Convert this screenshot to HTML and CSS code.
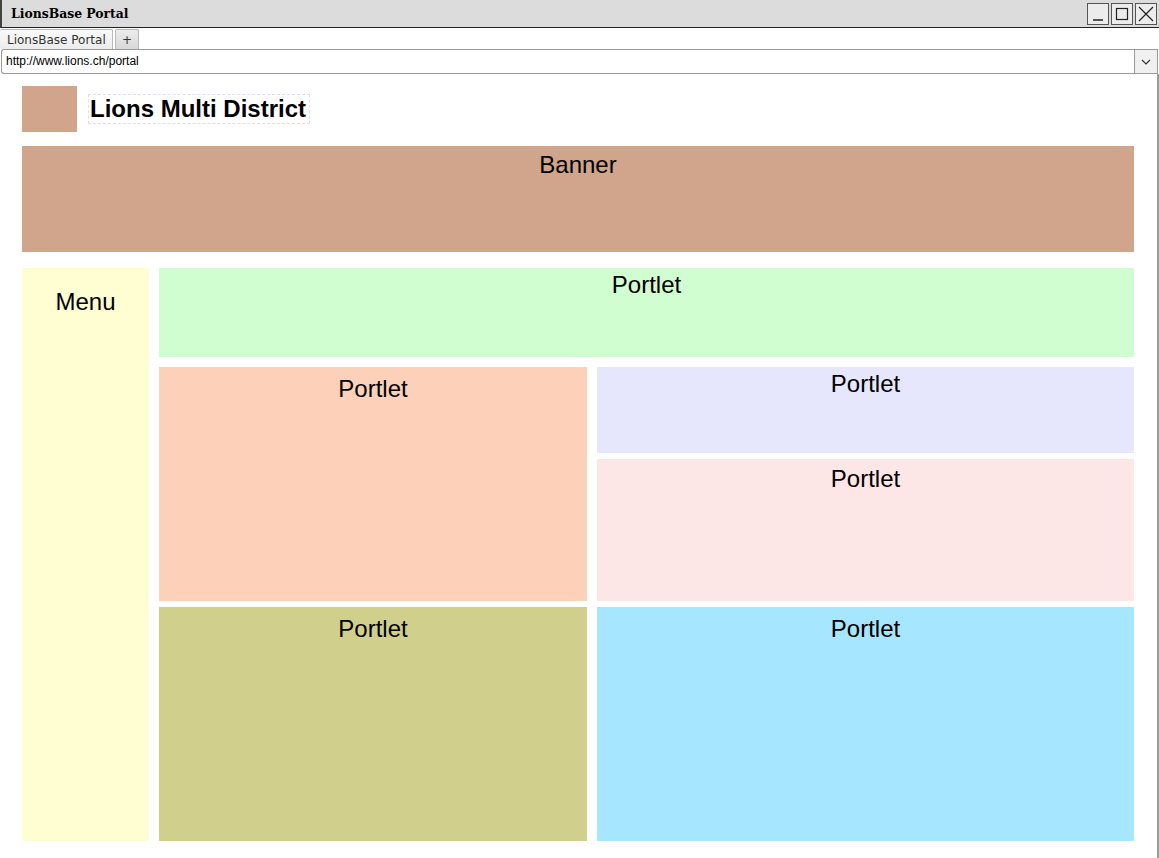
FILE: index.html
```html
<!DOCTYPE html>
<html lang="de">
<head>
    <meta charset="UTF-8">
    <title>LionsBase Portal</title>
    <link rel="stylesheet" href="styles.css">
</head>
<body>

<div class="titlebar">
    <span class="win-title">LionsBase Portal</span>
    <div class="win-buttons">
        <span class="win-btn"><svg width="18" height="18" viewBox="0 0 18 18"><line x1="4" y1="15" x2="14" y2="15" stroke="#222" stroke-width="1.5"/></svg></span>
        <span class="win-btn"><svg width="18" height="18" viewBox="0 0 18 18"><rect x="3.5" y="3.5" width="11" height="11" fill="none" stroke="#222" stroke-width="1.2"/></svg></span>
        <span class="win-btn"><svg width="18" height="18" viewBox="0 0 18 18"><path d="M2 2 L16 16 M16 2 L2 16" stroke="#222" stroke-width="1.2"/></svg></span>
    </div>
</div>

<div class="tabbar">
    <span class="tab active">LionsBase Portal</span>
    <span class="tab plus">+</span>
</div>

<div class="urlbar">
    <div class="url-input">http://www.lions.ch/portal</div>
    <div class="url-drop"><svg width="12" height="8" viewBox="0 0 12 8"><path d="M2 2 L6 6 L10 2" fill="none" stroke="#333" stroke-width="1.2"/></svg></div>
</div>

<div class="page">
    <div class="header">
        <div class="logo"></div>
        <div class="site-title">Lions Multi District</div>
    </div>

    <div class="banner">Banner</div>

    <div class="main">
        <div class="menu">Menu</div>
        <div class="content">
            <div class="box portlet-top">Portlet</div>
            <div class="row">
                <div class="box portlet-peach col-left">Portlet</div>
                <div class="stack">
                    <div class="box portlet-lavender">Portlet</div>
                    <div class="box portlet-pink">Portlet</div>
                </div>
            </div>
            <div class="row row-bottom">
                <div class="box portlet-olive col-left">Portlet</div>
                <div class="box portlet-cyan">Portlet</div>
            </div>
        </div>
    </div>
</div>

</body>
</html>
```

FILE: styles.css
```css
html, body {
    margin: 0;
    padding: 0;
    height: 100%;
}
body {
    background: #fff;
    font-family: "Liberation Sans", Arial, sans-serif;
    color: #000;
    overflow: hidden;
}

/* window chrome */
.titlebar {
    height: 27px;
    background: #dcdcdc;
    border-left: 2px solid #444;
    border-bottom: 1px solid #222;
    display: flex;
    align-items: center;
    justify-content: space-between;
    box-sizing: content-box;
}
.win-title {
    font-family: "DejaVu Serif", serif;
    font-weight: bold;
    font-size: 12.4px;
    padding-left: 9px;
}
.win-buttons {
    display: flex;
    gap: 2px;
    padding-right: 2px;
}
.win-btn {
    width: 20px;
    height: 20px;
    border: 1px solid #555;
    background: #ececec;
    display: flex;
    align-items: center;
    justify-content: center;
}
.tabbar {
    height: 21px;
    display: flex;
    align-items: flex-end;
    gap: 2px;
    background: #fff;
}
.tab {
    font-family: "DejaVu Sans", sans-serif;
    font-size: 12px;
    color: #333;
    height: 20px;
    line-height: 20px;
    border: 1px solid #b8b8b8;
    border-bottom: none;
    border-radius: 2px 2px 0 0;
    box-sizing: border-box;
}
.tab.active {
    background: linear-gradient(#fafafa, #ececec);
    padding: 0 6px 0 7px;
    border-left: none;
    width: 113px;
}
.tab.plus {
    background: linear-gradient(#ececec, #d8d8d8);
    width: 24px;
    text-align: center;
}
.urlbar {
    height: 25px;
    display: flex;
    padding: 0 1px 0 1px;
}
.url-input {
    flex: 1;
    border: 1px solid #9a9a9a;
    border-right: none;
    border-radius: 3px 0 0 3px;
    font-size: 12px;
    line-height: 22px;
    padding-left: 4px;
    background: #fff;
}
.url-drop {
    width: 22px;
    border: 1px solid #9a9a9a;
    background: #f0f0f0;
    display: flex;
    align-items: center;
    justify-content: center;
}

/* page */
.page {
    height: 784px;
    border-right: 2px solid #9c9c9c;
    padding: 12px 23px 0 22px;
    box-sizing: border-box;
    width: 1159px;
}
.header {
    display: flex;
    align-items: center;
    gap: 11px;
}
.logo {
    width: 55px;
    height: 46px;
    background: #d1a48c;
}
.site-title {
    font-weight: bold;
    font-size: 24px;
    line-height: 28px;
    padding: 0 3px 0 1px;
    border: 1px dashed #dcdcfc;
}
.banner {
    margin-top: 14px;
    height: 106px;
    background: #d1a48c;
    font-size: 24px;
    text-align: center;
    padding-top: 5px;
    box-sizing: border-box;
}
.main {
    margin-top: 16px;
    display: flex;
    gap: 10px;
    height: 573px;
}
.menu {
    width: 127px;
    background: #fefed2;
    font-size: 24px;
    text-align: center;
    padding-top: 20px;
    box-sizing: border-box;
}
.content {
    flex: 1;
    display: flex;
    flex-direction: column;
    gap: 10px;
}
.box {
    font-size: 24px;
    text-align: center;
    box-sizing: border-box;
    padding-top: 8px;
}
.portlet-top {
    height: 89px;
    background: #d0fed0;
    padding-top: 3px;
}
.row {
    display: flex;
    gap: 10px;
    height: 234px;
}
.row-bottom {
    margin-top: -4px;
}
.col-left {
    width: 428px;
}
.stack {
    flex: 1;
    display: flex;
    flex-direction: column;
    gap: 6px;
}
.portlet-peach {
    background: #fdd1b9;
}
.portlet-lavender {
    height: 86px;
    background: #e6e6fd;
    padding-top: 3px;
}
.portlet-pink {
    flex: 1;
    background: #fde6e6;
    padding-top: 6px;
}
.portlet-olive {
    background: #d0d08c;
}
.portlet-cyan {
    flex: 1;
    background: #a6e6fe;
}
```
